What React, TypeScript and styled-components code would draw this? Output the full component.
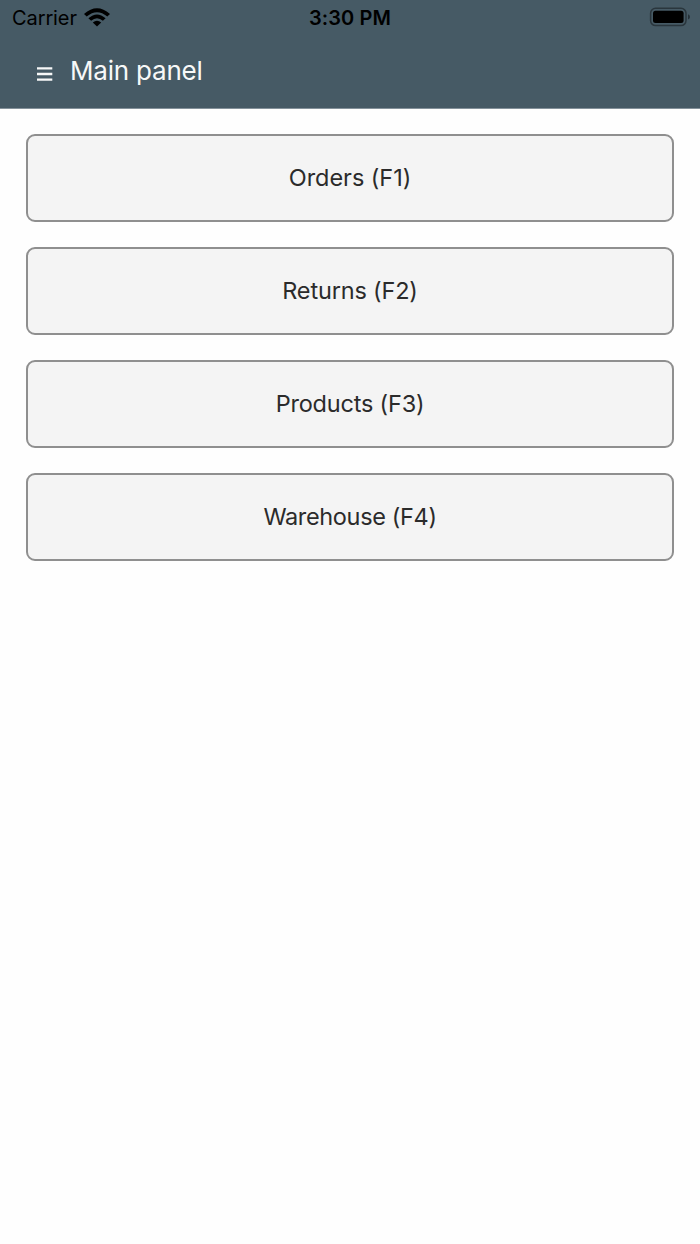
import React from "react";
import styled, { createGlobalStyle } from "styled-components";

const Global = createGlobalStyle`
  * { box-sizing: border-box; }
  body { margin: 0; background: #fefefe; font-family: Inter, sans-serif; }
`;
const Page = styled.div`
  min-height: 1244px;
  background: #fefefe;
`;
const Top = styled.header`
  height: 109px;
  background: #465a65;
  border-bottom: 1px solid #84919a;
`;
const StatusBar = styled.div`
  height: 36px;
  padding: 0 9px 0 12px;
  display: grid;
  grid-template-columns: 1fr auto 1fr;
  align-items: center;
  color: #000;
`;
const Carrier = styled.div`
  display: flex;
  align-items: center;
  gap: 7px;
  font-size: 20px;
  letter-spacing: -0.1px;
  line-height: 36px;
`;
const Clock = styled.div`
  margin-right: 3px;
  font-size: 20px;
  font-weight: 600;
  letter-spacing: 0.1px;
  line-height: 36px;
`;
const WifiIcon = styled.svg`
  display: block;
  margin-top: -2px;
`;
const Battery = styled.svg`
  justify-self: end;
  display: block;
  margin-top: -2px;
`;
const TitleBar = styled.div`
  height: 70px;
  padding-left: 37px;
  display: flex;
  align-items: center;
  color: #f7f8f8;
`;
const MenuIcon = styled.svg`
  display: block;
  margin: 6px 17px 0 0;
`;
const Title = styled.h1`
  margin: 0;
  font-size: 26px;
  font-weight: 400;
  letter-spacing: -0.2px;
  line-height: 32px;
`;
const Menu = styled.main`
  display: flex;
  flex-direction: column;
  gap: 25px;
  padding: 25px 26px;
`;
const MenuButton = styled.button<{ $tracking: number }>`
  height: 88px;
  padding: 0;
  border: 2px solid #8f8f8f;
  border-radius: 9px;
  background: #f4f4f4;
  color: #2b2b2b;
  font: 400 23.5px/30px Inter, sans-serif;
  letter-spacing: ${({ $tracking }) => $tracking}px;
`;

const items = [
  { label: "Orders (F1)", tracking: -0.05 },
  { label: "Returns (F2)", tracking: -0.17 },
  { label: "Products (F3)", tracking: -0.2 },
  { label: "Warehouse (F4)", tracking: -0.35 },
];

export default function App() {
  return (
    <Page>
      <Global />
      <Top>
        <StatusBar>
          <Carrier>
            <span>Carrier</span>
            <WifiIcon width="26" height="19" viewBox="0 0 26 19">
              <path d="M0 6Q13-5.600 26 6L23.300 8.500Q13-.2 2.700 8.500Z" />
              <path d="M4.400 10.200Q13 2.600 21.600 10.200L18.900 12.800Q13 7.800 7.100 12.800Z" />
              <path d="M8.800 14.500Q13 10.900 17.200 14.500L13 18.600Z" />
            </WifiIcon>
          </Carrier>
          <Clock>3:30 PM</Clock>
          <Battery width="42" height="20" viewBox="0 0 42 20">
            <rect x="1.600" y="1.200" width="35.400" height="17.400" rx="5" fill="none" stroke="#2a363d" strokeWidth="1.500" />
            <rect x="4" y="3.700" width="30.600" height="12.400" rx="2.500" />
            <path d="M39 7.200Q41 8 41 9.900T39 12.600Z" fill="#26323a" />
          </Battery>
        </StatusBar>
        <TitleBar>
          <MenuIcon width="16" height="14" viewBox="0 0 16 14" stroke="#f7f8f8" strokeWidth="2.300">
            <path d="M0 1.400H15.300M0 7H15.300M0 12.600H15.300" />
          </MenuIcon>
          <Title>Main panel</Title>
        </TitleBar>
      </Top>
      <Menu>
        {items.map(({ label, tracking }) => (
          <MenuButton key={label} $tracking={tracking}>{label}</MenuButton>
        ))}
      </Menu>
    </Page>
  );
}
